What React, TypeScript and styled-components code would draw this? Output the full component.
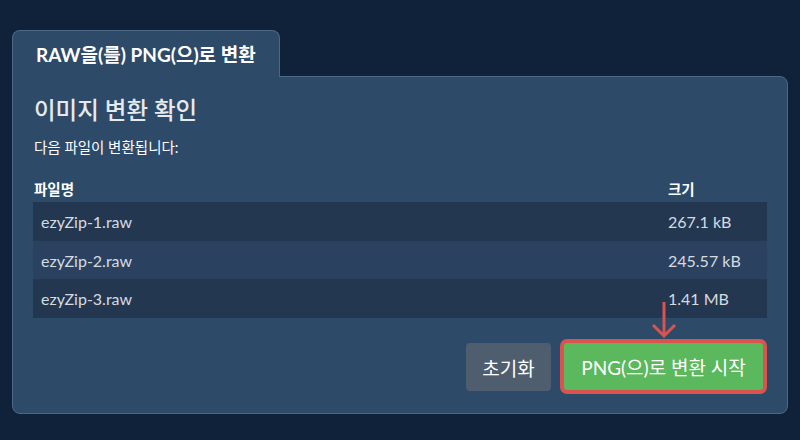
import React from "react";
import styled, { createGlobalStyle } from "styled-components";

const Global = createGlobalStyle`
  html, body { margin: 0; padding: 0; background: #10223a; }
  body { font-family: Lato, "Noto Sans CJK KR", sans-serif; color: #e4e8ec; }
  * { box-sizing: border-box; }
`;

const Page = styled.div`
  width: 800px;
  height: 440px;
  padding: 30px 12px 0 12px;
  display: flex;
  flex-direction: column;
`;

const TabBar = styled.div`
  display: flex;
  margin-bottom: -1px;
  position: relative;
  z-index: 1;
`;

const Tab = styled.div`
  height: 47px;
  padding: 0 23px 1px 23px;
  display: flex;
  align-items: center;
  background: #2d4a69;
  border: 1px solid #4d6784;
  border-bottom: none;
  border-radius: 8px 8px 0 0;
  font-size: 19px;
  font-weight: 700;
  color: #ffffff;
`;

const Panel = styled.div`
  background: #2d4a69;
  border: 1px solid #4d6784;
  border-radius: 0 8px 8px 8px;
  padding: 15px 20px 22px 20px;
  display: flex;
  flex-direction: column;
`;

const Title = styled.h2`
  margin: 0 0 0 1px;
  font-size: 23.5px;
  font-weight: 500;
  color: #e6e9ed;
  line-height: 36px;
`;

const Sub = styled.p`
  margin: 10px 0 0 1px;
  font-size: 14.5px;
  color: #ffffff;
  line-height: 20px;
`;

const Table = styled.div`
  margin-top: 16px;
  display: flex;
  flex-direction: column;
`;

const HeadRow = styled.div`
  display: grid;
  grid-template-columns: 627px 1fr;
  height: 28px;
  align-items: center;
  font-size: 14.5px;
  font-weight: 700;
  color: #ffffff;
`;

const HeadCell = styled.div<{ $first?: boolean }>`
  padding-left: ${(p) => (p.$first ? "1px" : "8px")};
`;

const Row = styled.div<{ $alt?: boolean }>`
  display: grid;
  grid-template-columns: 627px 1fr;
  height: 38.7px;
  align-items: center;
  background: ${(p) => (p.$alt ? "#2a4260" : "#243750")};
  font-size: 16px;
  color: #d6dbe1;
`;

const Cell = styled.div`
  padding-left: 8px;
`;

const Actions = styled.div`
  margin-top: 25px;
  display: flex;
  justify-content: flex-end;
  align-items: flex-start;
  gap: 13px;
  padding-right: 4px;
`;

const ResetButton = styled.button`
  height: 48px;
  width: 85px;
  padding: 0;
  border: none;
  border-radius: 4px;
  background: #4f5e6f;
  color: #ffffff;
  font-family: Lato, "Noto Sans CJK KR", sans-serif;
  font-size: 19px;
`;

const StartWrap = styled.div`
  position: relative;
`;

const StartButton = styled.button`
  height: 47px;
  width: 199px;
  padding: 0;
  border: none;
  border-radius: 3px;
  background: #5cb85c;
  box-shadow: 0 0 0 4px #d9534f;
  color: #ffffff;
  font-family: Lato, "Noto Sans CJK KR", sans-serif;
  font-size: 19px;
`;

const Arrow = styled.svg`
  position: absolute;
  left: 50%;
  top: -42px;
  transform: translateX(-50%);
`;

const files = [
  { name: "ezyZip-1.raw", size: "267.1 kB" },
  { name: "ezyZip-2.raw", size: "245.57 kB" },
  { name: "ezyZip-3.raw", size: "1.41 MB" },
];

export default function App() {
  return (
    <Page>
      <Global />
      <TabBar>
        <Tab>RAW을(를) PNG(으)로 변환</Tab>
      </TabBar>
      <Panel>
        <Title>이미지 변환 확인</Title>
        <Sub>다음 파일이 변환됩니다:</Sub>
        <Table>
          <HeadRow>
            <HeadCell $first>파일명</HeadCell>
            <HeadCell>크기</HeadCell>
          </HeadRow>
          {files.map((f, i) => (
            <Row key={f.name} $alt={i === 1}>
              <Cell>{f.name}</Cell>
              <Cell>{f.size}</Cell>
            </Row>
          ))}
        </Table>
        <Actions>
          <ResetButton>초기화</ResetButton>
          <StartWrap>
            <StartButton>PNG(으)로 변환 시작</StartButton>
            <Arrow width="26" height="38" viewBox="0 0 26 38">
              <path
                d="M13 1 V35 M2 24 L13 35 L24 24"
                fill="none"
                stroke="#d9534f"
                strokeWidth="3"
              />
            </Arrow>
          </StartWrap>
        </Actions>
      </Panel>
    </Page>
  );
}
